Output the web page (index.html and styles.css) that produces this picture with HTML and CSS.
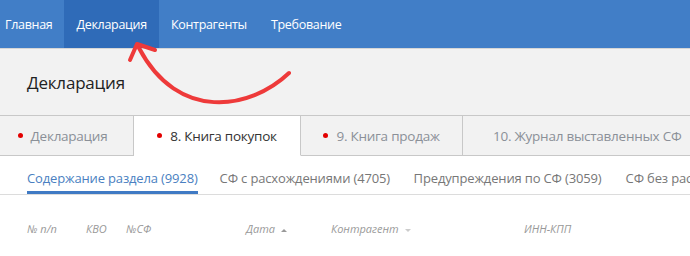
FILE: index.html
```html
<!DOCTYPE html>
<html lang="ru">
<head>
    <meta charset="UTF-8">
    <title>Декларация</title>
    <link rel="stylesheet" href="styles.css">
</head>
<body>
    <nav class="navbar">
        <ul class="nav-list">
            <li><a href="#main">Главная</a></li>
            <li class="active"><a href="#decl">Декларация</a></li>
            <li><a href="#partners">Контрагенты</a></li>
            <li><a href="#demand">Требование</a></li>
        </ul>
    </nav>

    <header class="page-header">
        <h1>Декларация</h1>
    </header>

    <!-- Section tabs -->
    <div class="tabs">
        <div class="tab tab-first"><span class="dot"></span>Декларация</div>
        <div class="tab active"><span class="dot"></span>8. Книга покупок</div>
        <div class="tab tab-third"><span class="dot"></span>9. Книга продаж</div>
        <div class="tab tab-last">10. Журнал выставленных СФ</div>
    </div>

    <div class="subtabs">
        <a class="subtab active" href="#content">Содержание раздела (9928)</a>
        <a class="subtab w-diff" href="#diff">СФ с расхождениями (4705)</a>
        <a class="subtab w-warn" href="#warn">Предупреждения по СФ (3059)</a>
        <a class="subtab" href="#nodiff">СФ без расхождений</a>
    </div>

    <div class="columns">
        <span class="col col-num">№ п/п</span>
        <span class="col col-kvo">КВО</span>
        <span class="col col-sf">№СФ</span>
        <span class="col col-date">Дата <span class="sort up"></span></span>
        <span class="col col-partner">Контрагент <span class="sort down"></span></span>
        <span class="col col-inn">ИНН-КПП</span>
    </div>

    <svg class="arrow" width="690" height="256" viewBox="0 0 690 256">
        <path d="M289 73 C250 110, 178 122, 139 48" fill="none" stroke="#ee3a3a" stroke-width="4" stroke-linecap="round"/>
        <path d="M130 60 L137 44 L155 50" fill="none" stroke="#ee3a3a" stroke-width="4" stroke-linecap="round" stroke-linejoin="round"/>
    </svg>
</body>
</html>
```

FILE: styles.css
```css
* {
    margin: 0;
    padding: 0;
    box-sizing: border-box;
}

body {
    font-family: "Open Sans", "Noto Sans", sans-serif;
    color: #333;
    background: #fff;
    overflow: hidden;
}

/* Top navigation */
.navbar {
    background-color: #417ec7;
    height: 49px;
    border-bottom: 1px solid #d6d6d6;
}

.nav-list {
    display: flex;
    list-style: none;
    height: 48px;
}

.nav-list li {
    display: flex;
    align-items: center;
    padding: 0 12px;
}

.nav-list li:first-child {
    padding-left: 5px;
}

.nav-list li.active {
    background-color: #2f6bb8;
}

.nav-list a {
    color: #fff;
    text-decoration: none;
    font-size: 12.5px;
    letter-spacing: -0.3px;
}

/* Page title */
.page-header {
    background-color: #f2f2f2;
    height: 66px;
    padding: 22px 27px 0;
}

.page-header h1 {
    font-weight: normal;
    font-size: 17px;
    color: #222;
    letter-spacing: -0.2px;
}

/* Section tabs */
.tabs {
    display: flex;
    background-color: #f2f2f2;
    height: 41px;
}

.tab {
    display: flex;
    align-items: center;
    justify-content: center;
    border-top: 1px solid #c8c8c8;
    border-right: 1px solid #c8c8c8;
    border-bottom: 1px solid #c8c8c8;
    font-size: 13.5px;
    color: #8b9098;
    letter-spacing: -0.25px;
    white-space: nowrap;
}

.tab-first {
    width: 134px;
    padding-right: 8px;
}

.tab.active {
    width: 167px;
    background-color: #fff;
    color: #333;
    border-bottom-color: #fff;
}

.tab-third {
    width: 162px;
}

.tab-last {
    flex: 1;
    justify-content: flex-start;
    padding-left: 30px;
    border-right: none;
}

.dot {
    width: 5px;
    height: 5px;
    border-radius: 50%;
    background-color: #e30000;
    margin-right: 8px;
}

/* Sub tabs */
.subtabs {
    display: flex;
    gap: 22px;
    padding: 13px 0 0 27px;
    height: 39px;
    border-bottom: 1px solid #dcdcdc;
    white-space: nowrap;
}

.subtab {
    font-size: 13px;
    color: #777;
    text-decoration: none;
    letter-spacing: -0.15px;
    height: 25px;
}

.subtab.w-diff {
    min-width: 172px;
}

.subtab.w-warn {
    min-width: 190px;
}

.subtab.active {
    color: #4a7fc1;
    border-bottom: 3px solid #3f7ac4;
}

/* Column headers */
.columns {
    position: relative;
    height: 61px;
    font-size: 11px;
    font-style: italic;
    color: #999;
}

.col {
    position: absolute;
    top: 26px;
    white-space: nowrap;
}

.col-num { left: 27px; }
.col-kvo { left: 86px; }
.col-sf { left: 126px; }
.col-date { left: 246px; }
.col-partner { left: 331px; }
.col-inn { left: 524px; }

.sort {
    display: inline-block;
    width: 0;
    height: 0;
    border-left: 3px solid transparent;
    border-right: 3px solid transparent;
    margin-left: 3px;
    vertical-align: middle;
}

.sort.up {
    border-bottom: 3px solid #999;
}

.sort.down {
    border-top: 3px solid #ccc;
}

/* Annotation arrow drawn over the page */
.arrow {
    position: absolute;
    top: 0;
    left: 0;
    pointer-events: none;
}
```
